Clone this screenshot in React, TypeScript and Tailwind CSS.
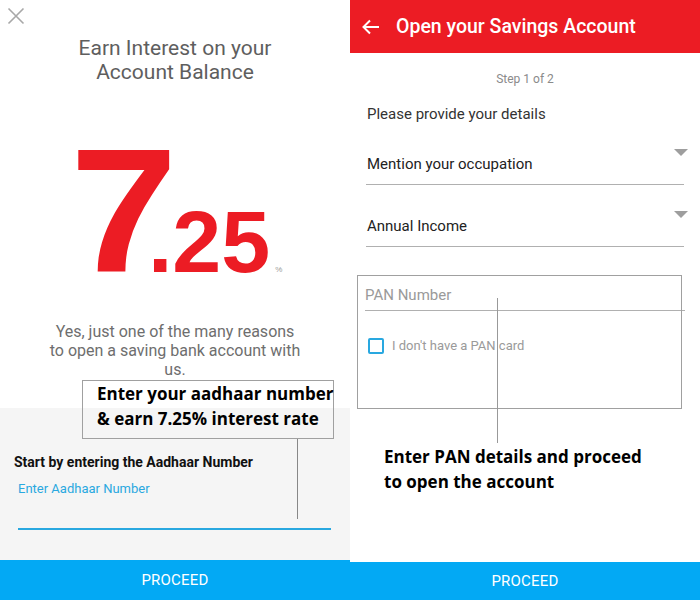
import React from "react";

const roboto = { fontFamily: "Roboto, 'Liberation Sans', sans-serif" };

function Triangle() {
  return (
    <svg width="14" height="8" viewBox="0 0 14 8" className="shrink-0">
      <path d="M0 0 L14 0 L7 7 Z" fill="#9e9e9e" />
    </svg>
  );
}

export default function App() {
  return (
    <div className="relative flex w-[700px] h-[600px] bg-white overflow-hidden" style={roboto}>
      {/* LEFT PANEL */}
      <div className="flex flex-col w-[350px] h-full">
        <div className="relative h-[408px] bg-white">
          <svg width="18" height="18" viewBox="0 0 18 18" className="absolute left-[7px] top-[7px]">
            <path d="M1.5 1.5 L16.5 16.5 M16.5 1.5 L1.5 16.5" stroke="#a8a8a8" strokeWidth="1.6" />
          </svg>
          <div className="pt-[36px] text-center text-[21px] leading-[24px] text-[#5e5e5e]">
            Earn Interest on your
            <br />
            Account Balance
          </div>
          <div className="mt-[39px] flex items-baseline pl-[70px] text-[#ec1c24] font-bold leading-none" style={{ fontFamily: "'Liberation Sans', Arial, sans-serif" }}>
            <span className="text-[176px] leading-none inline-block origin-left scale-x-[1.1]">7</span>
            <span className="text-[88px] leading-none ml-[-20px]">.25</span>
            <span className="text-[8px] leading-none ml-[5px] text-[#999] font-normal">%</span>
          </div>
          <div className="mt-[23px] text-center text-[16px] leading-[19px] text-[#6e6e6e]">
            Yes, just one of the many reasons
            <br />
            to open a saving bank account with
            <br />
            us.
          </div>
        </div>
        <div className="flex-1 bg-[#f5f5f5] px-[14px] pt-[46px]">
          <div className="text-[14px] leading-[17px] font-bold text-[#111]">Start by entering the Aadhaar Number</div>
          <div className="mt-[10px] ml-[4px] text-[13px] leading-[16px] text-[#29a8e0]">Enter Aadhaar Number</div>
          <div className="mt-[31px] ml-[4px] mr-[5px] h-[2px] bg-[#29a8e0]" />
        </div>
        <div className="h-[40px] bg-[#03a9f4] flex items-center justify-center text-white text-[15px] tracking-[0.2px]">
          PROCEED
        </div>
      </div>

      {/* RIGHT PANEL */}
      <div className="flex flex-col w-[350px] h-full bg-white">
        <div className="h-[53px] bg-[#ec1c24] flex items-center pl-[12px] text-white">
          <svg width="18" height="16" viewBox="0 0 18 16" className="shrink-0">
            <path d="M17 8 H2 M8 1.5 L1.5 8 L8 14.5" stroke="white" strokeWidth="2" fill="none" />
          </svg>
          <span className="ml-[16px] text-[19.5px] leading-none font-medium">Open your Savings Account</span>
        </div>
        <div className="pt-[19px] text-center text-[12px] leading-[14px] text-[#8a8a8a]">Step 1 of 2</div>
        <div className="mt-[19px] pl-[17px] text-[15px] leading-[18px] text-[#333]">Please provide your details</div>
        <div className="mt-[22px] ml-[16px] mr-[16px] flex items-start justify-between border-b border-[#b0b0b0] pb-[11px] pt-[10px]">
          <span className="text-[15px] leading-[18px] text-[#222] pl-[1px]">Mention your occupation</span>
          <div className="mt-[-6px] mr-[-4px]"><Triangle /></div>
        </div>
        <div className="mt-[22px] ml-[16px] mr-[16px] flex items-start justify-between border-b border-[#b0b0b0] pb-[11px] pt-[10px]">
          <span className="text-[15px] leading-[18px] text-[#222] pl-[1px]">Annual Income</span>
          <div className="mt-[-6px] mr-[-4px]"><Triangle /></div>
        </div>
        <div className="mt-[39px] ml-[15px] mr-[15px] border-b border-[#b0b0b0] pb-[6px] text-[15px] leading-[18px] text-[#9a9a9a]">
          PAN Number
        </div>
        <div className="mt-[27px] ml-[18px] flex items-center">
          <div className="w-[16px] h-[16px] rounded-[2px] border-2 border-[#29a8e0]" />
          <span className="ml-[8px] text-[13px] leading-[16px] text-[#9a9a9a]">I don't have a PAN card</span>
        </div>
        <div className="flex-1" />
        <div className="h-[38px] bg-[#03a9f4] flex items-center justify-center text-white text-[15px] tracking-[0.2px]">
          PROCEED
        </div>
      </div>

      {/* ANNOTATIONS (overlay) */}
      <div className="absolute left-[82px] top-[380px] w-[252px] h-[59px] border border-[#a0a0a0]" />
      <div
        className="absolute left-[97px] top-[381px] text-[17px] leading-[25px] font-bold text-black whitespace-nowrap"
        style={{ fontFamily: "'Open Sans', sans-serif" }}
      >
        Enter your aadhaar number
        <br />
        &amp; earn 7.25% interest rate
      </div>
      <div className="absolute left-[297px] top-[439px] w-px h-[80px] bg-[#888]" />

      <div className="absolute left-[357px] top-[275px] w-[325px] h-[134px] border border-[#a0a0a0]" />
      <div className="absolute left-[497px] top-[298px] w-px h-[145px] bg-[#999]" />
      <div
        className="absolute left-[384px] top-[444px] text-[17px] leading-[25px] font-bold text-black whitespace-nowrap"
        style={{ fontFamily: "'Open Sans', sans-serif" }}
      >
        Enter PAN details and proceed
        <br />
        to open the account
      </div>
    </div>
  );
}
